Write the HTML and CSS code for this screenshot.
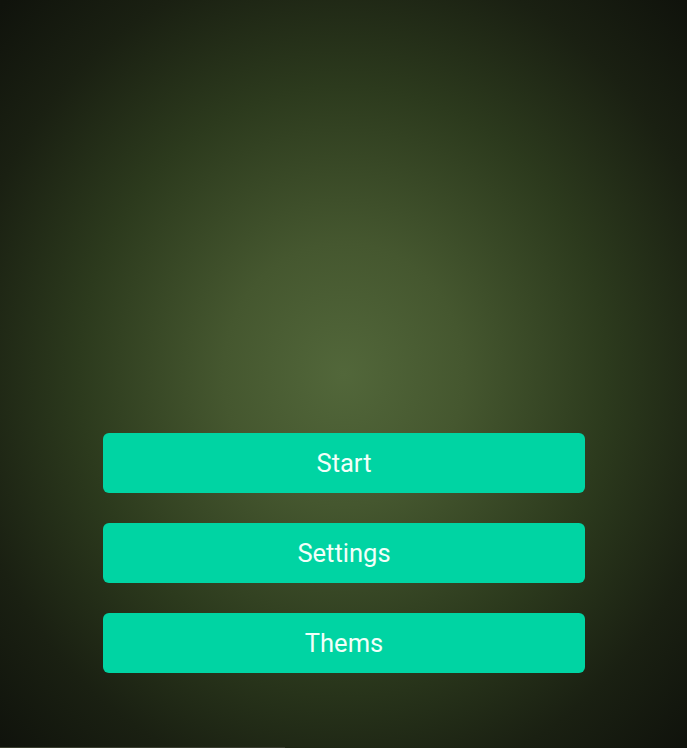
FILE: index.html
```html
<!DOCTYPE html>
<html>
<head>
<meta charset="utf-8">
<link rel="stylesheet" href="styles.css">
</head>
<body>
<main class="screen">
  <nav class="menu">
    <button class="menu-btn">Start</button>
    <button class="menu-btn">Settings</button>
    <button class="menu-btn">Thems</button>
  </nav>
  <div class="bottom-line"></div>
</main>
</body>
</html>
```

FILE: styles.css
```css
html, body {
  margin: 0;
  padding: 0;
  height: 100%;
}
body {
  overflow: hidden;
}
.screen {
  position: relative;
  width: 687px;
  height: 748px;
  background: radial-gradient(ellipse 70% 70% at 50% 50%, #52673a 0%, #45572f 25%, #2c3a1d 55%, #1a2012 80%, #10130c 100%);
  display: flex;
  flex-direction: column;
  align-items: center;
  padding-top: 433px;
  box-sizing: border-box;
}
.menu {
  display: flex;
  flex-direction: column;
  gap: 30px;
  width: 482px;
  margin-left: 1px;
}
.menu-btn {
  height: 60px;
  border: none;
  border-radius: 6px;
  background: #00d4a3;
  color: #f2fff9;
  font-family: Roboto, "Liberation Sans", sans-serif;
  font-size: 25.5px;
  padding: 0;
}
.bottom-line {
  position: absolute;
  left: 0;
  bottom: 0;
  width: 285px;
  height: 1px;
  background: #3a3f30;
}
```
